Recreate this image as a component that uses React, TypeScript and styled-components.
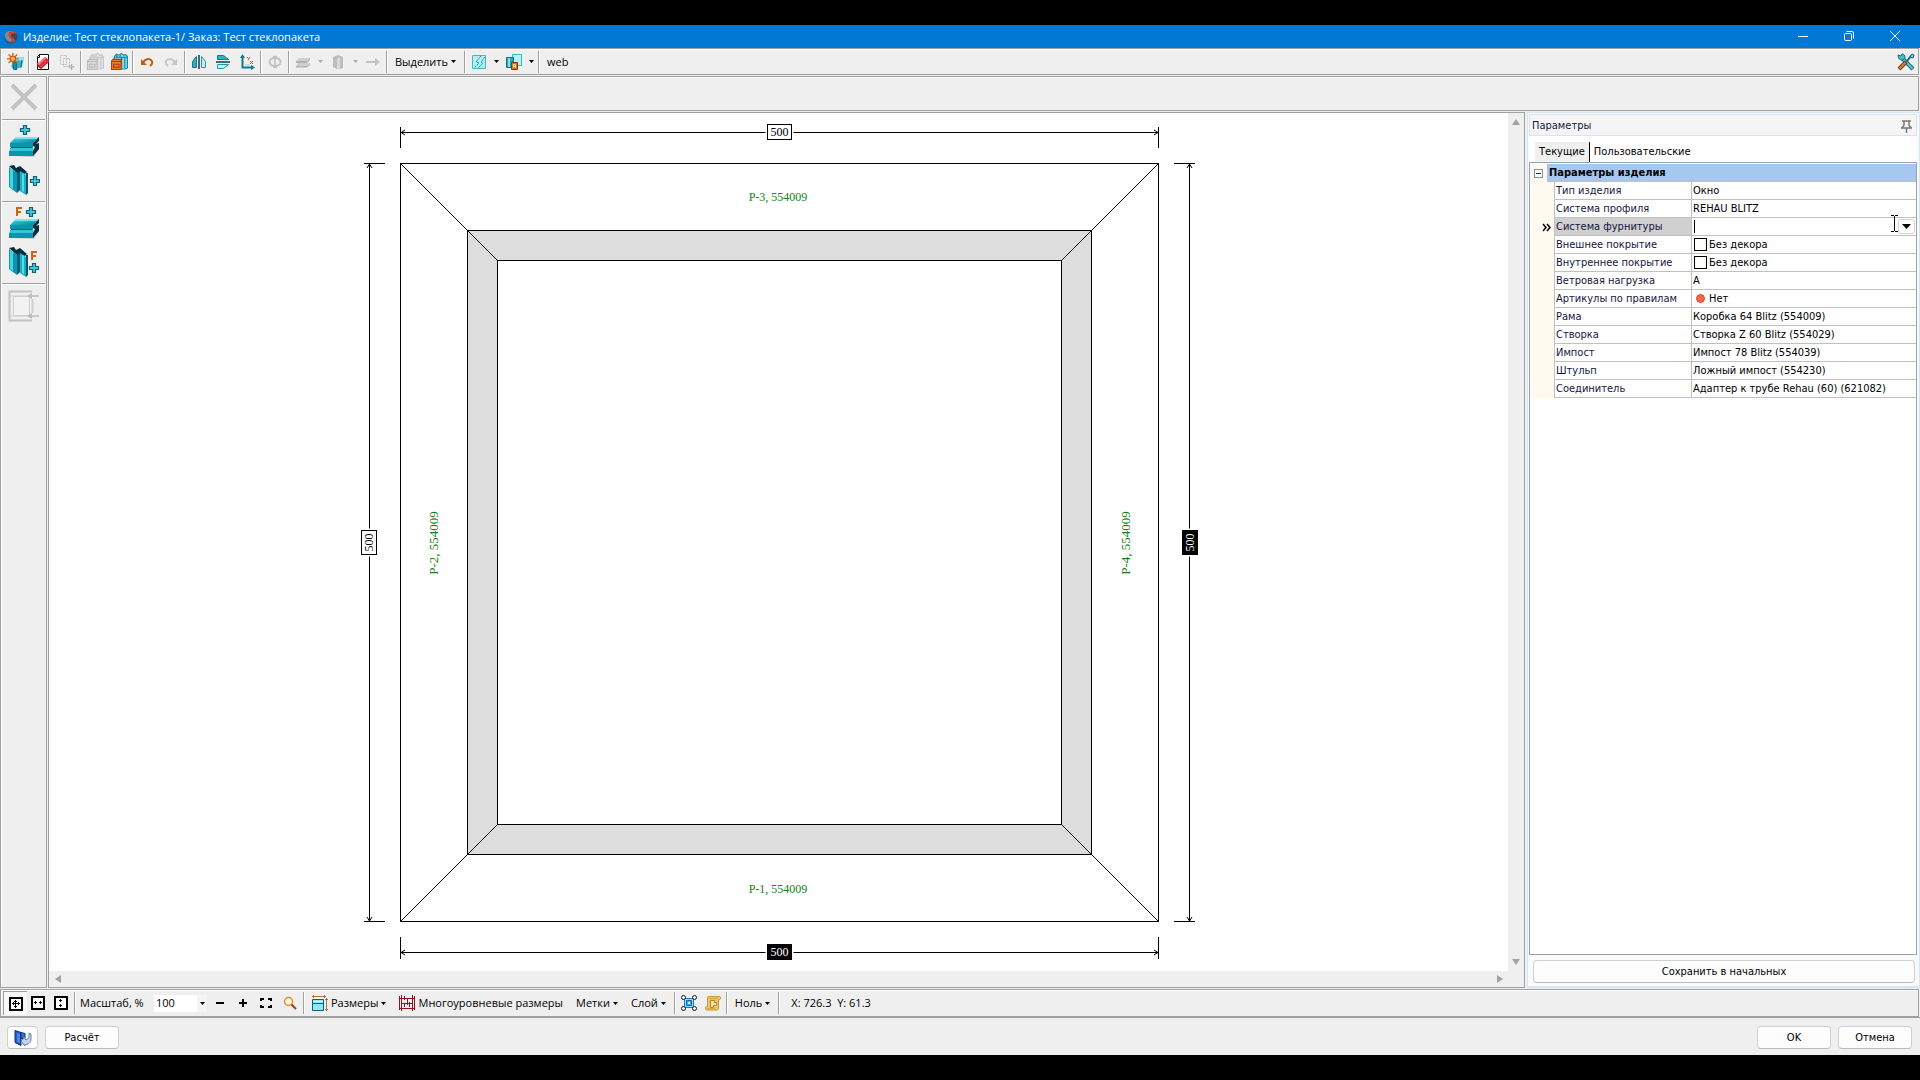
import React from 'react';
import styled, { createGlobalStyle, css } from 'styled-components';

const UI = '"Open Sans", "Noto Sans", sans-serif';
const GRID = '"DejaVu Sans Condensed", "DejaVu Sans", sans-serif';
const LINE = '#a0a0a0';
const FACE = '#efefef';

const GlobalStyle = createGlobalStyle`
  *, *::before, *::after { box-sizing: border-box; }
  body { margin: 0; background: #000; }
  button, input, select { font: inherit; color: inherit; margin: 0; padding: 0; border: 0; background: none; border-radius: 0; outline: none; }
  svg { display: block; flex: none; }
`;

const Screen = styled.div`
  display: flex;
  flex-direction: column;
  height: 100vh;
  padding: 25px 0;
  background: #000;
  color: #000;
  font: 11px/16px ${UI};
`;

const Window = styled.main`
  flex: 1;
  min-height: 0;
  display: flex;
  flex-direction: column;
  background: ${FACE};
`;

const TitleBar = styled.header`
  flex: none;
  display: flex;
  align-items: center;
  gap: 4px;
  height: 23px;
  padding: 0 2px 0 3px;
  background: #0078d4;
  color: #fff;
`;

const Title = styled.h1`
  flex: 1;
  margin: 0;
  font-size: 11px;
  font-weight: 400;
  white-space: nowrap;
`;

const WindowButtons = styled.div`
  display: flex;
`;

const WindowButton = styled.button`
  display: flex;
  align-items: center;
  justify-content: center;
  width: 46px;
  height: 23px;
  padding-bottom: 2px;
`;

const Bar = styled.div<{ $h: number }>`
  flex: none;
  display: flex;
  align-items: center;
  height: ${p => p.$h}px;
  margin-right: 1px;
  padding-left: 2px;
  border: 1px solid ${LINE};
  box-shadow: inset 1px 1px 0 #fff;
`;

const Separator = styled.i`
  flex: none;
  width: 2px;
  height: 22px;
  margin: 0 1px;
  border-left: 1px solid ${LINE};
  border-right: 1px solid #fff;
`;

const Tool = styled.button<{ $w?: number; $pressed?: boolean }>`
  flex: none;
  display: flex;
  align-items: center;
  justify-content: center;
  width: ${p => p.$w ?? 24}px;
  height: 24px;
  ${p => p.$pressed && css`
    background: #f8f8f8;
    border-left: 1px solid ${LINE};
    border-top: 1px solid ${LINE};
  `}
`;

const TextTool = styled.button`
  flex: none;
  display: flex;
  align-items: center;
  gap: 3px;
  height: 24px;
  padding: 0 7px 0 6px;
  white-space: nowrap;
`;

const Spacer = styled.div`
  flex: 1;
`;

const Body = styled.div`
  flex: 1;
  min-height: 0;
  display: flex;
  gap: 1px;
  margin: 1px 0;
`;

const SideBar = styled.nav`
  flex: none;
  display: flex;
  flex-direction: column;
  align-items: center;
  width: 47px;
  border: 1px solid ${LINE};
  box-shadow: inset 1px 1px 0 #fff;
`;

const SideTool = styled.button<{ $h?: number }>`
  display: flex;
  align-items: center;
  justify-content: center;
  width: 40px;
  height: ${p => p.$h ?? 38}px;
`;

const SideRule = styled.hr`
  width: 43px;
  height: 2px;
  margin: 2px 0;
  border: 0;
  border-top: 1px solid ${LINE};
  border-bottom: 1px solid #fff;
`;

const Work = styled.div`
  flex: 1;
  min-width: 0;
  display: flex;
  flex-direction: column;
  gap: 1px;
`;

const Split = styled.div`
  flex: 1;
  min-height: 0;
  display: flex;
  gap: 2px;
`;

const Viewer = styled.section`
  flex: 1;
  min-width: 0;
  display: grid;
  grid-template: minmax(0, 1fr) 16px / minmax(0, 1fr) 16px;
  border: 1px solid ${LINE};
`;

const Canvas = styled.div`
  display: flex;
  align-items: center;
  justify-content: center;
  background: #fff;
  overflow: hidden;
`;

const ScrollBar = styled.div<{ $row?: boolean }>`
  display: flex;
  flex-direction: ${p => (p.$row ? 'row' : 'column')};
  justify-content: space-between;
  align-items: center;
  padding: ${p => (p.$row ? '0 3px 0 4px' : '4px 0')};
`;

const ArrowButton = styled.button`
  display: flex;
  align-items: center;
  justify-content: center;
  width: 10px;
  height: 10px;
`;

const Panel = styled.aside`
  flex: none;
  display: flex;
  flex-direction: column;
  width: 393px;
  padding: 1px 2px 0 1px;
  border: 1px solid #d6e6f5;
  border-bottom-width: 2px;
  background: #fafafa;
  font: 11px/16px ${GRID};
`;

const PanelHead = styled.div`
  flex: none;
  display: flex;
  align-items: center;
  justify-content: space-between;
  height: 22px;
  padding: 2px 4px 0 2px;
  border: 1px solid #dbe2ec;
  background: #f5f5f5;
  color: #15153c;
`;

const PanelTitle = styled.h2`
  margin: 0;
  font-size: 11px;
  font-weight: 400;
`;

const Tabs = styled.div`
  flex: none;
  display: flex;
  height: 26px;
  padding: 6px 0 0 6px;
  background: #fff;
`;

const Tab = styled.button<{ $active?: boolean }>`
  padding: 0 4px;
  background: ${p => (p.$active ? '#f0f0f0' : 'transparent')};
  border-right: ${p => (p.$active ? '1px solid #000' : '0')};
`;

const GridBox = styled.div`
  flex: 1;
  min-height: 0;
  padding-top: 1px;
  border: 1px solid #95a3b3;
  background: #fff;
`;

const Props = styled.table`
  width: 100%;
  table-layout: fixed;
  border-collapse: separate;
  border-spacing: 0;
`;

const Col = styled.col<{ $w?: number }>`
  width: ${p => (p.$w ? `${p.$w}px` : 'auto')};
`;

const Group = styled.th`
  height: 18px;
  padding: 0 0 0 2px;
  background: #a6c8ee;
  border-bottom: 1px solid #c0c0c0;
  font-weight: 700;
  text-align: left;
`;

const Gutter = styled.td`
  height: 18px;
  padding: 0;
  background: #fffaf0;
`;

const GutterInner = styled.div`
  display: flex;
  align-items: center;
  justify-content: flex-end;
  padding-right: 3px;
`;

const Fold = styled.button`
  display: flex;
  align-items: center;
  justify-content: center;
  width: 9px;
  height: 9px;
  margin-left: 4px;
  border: 1px solid #8292a8;
  background: #fff;
`;

const Name = styled.th<{ $active?: boolean }>`
  height: 18px;
  padding: 0 0 0 1px;
  border-left: 1px solid #c0c0c0;
  border-bottom: 1px solid #c0c0c0;
  background: ${p => (p.$active ? '#d0d0d0' : '#fff')};
  color: #15153c;
  font-weight: 400;
  text-align: left;
  white-space: nowrap;
`;

const Value = styled.td`
  height: 18px;
  padding: 0 0 0 1px;
  border-left: 1px solid #c0c0c0;
  border-bottom: 1px solid #c0c0c0;
  white-space: nowrap;
`;

const ValueInner = styled.div`
  position: relative;
  display: flex;
  align-items: center;
  gap: 2px;
  height: 17px;
`;

const Swatch = styled.span`
  width: 13px;
  height: 13px;
  margin-left: 1px;
  border: 1px solid #000;
`;

const Dot = styled.span`
  width: 9px;
  height: 9px;
  margin: 0 2px 0 3px;
  border: 1px solid #c8503c;
  border-radius: 50%;
  background: #f8654a;
`;

const Caret = styled.span`
  width: 1px;
  height: 13px;
  margin-left: 1px;
  background: #000;
`;

const Field = styled.input`
  flex: 1;
  min-width: 0;
  height: 16px;
`;

const DropButton = styled.button`
  display: flex;
  align-items: center;
  justify-content: center;
  width: 17px;
  height: 15px;
  margin-right: 1px;
  border: 1px solid #d0d0d0;
  border-radius: 3px;
  background: #fdfdfd;
`;

const Pointer = styled.svg`
  position: absolute;
  right: 18px;
  top: -3px;
`;

const PanelFoot = styled.div`
  flex: none;
  padding: 5px 2px 3px 4px;
`;

const PushButton = styled.button<{ $w?: string }>`
  display: flex;
  align-items: center;
  justify-content: center;
  width: ${p => p.$w ?? '74px'};
  height: 23px;
  border: 1px solid #d0d0d0;
  border-bottom-color: #bcbcbc;
  border-radius: 4px;
  background: #fdfdfd;
  font: 11px/16px ${GRID};
`;

const ZoomLabel = styled.label`
  width: 77px;
  padding-left: 3px;
  white-space: nowrap;
`;

const ZoomBox = styled.div`
  display: flex;
  align-items: center;
  width: 53px;
  height: 17px;
  margin-right: 1px;
  background: linear-gradient(to right, #fff 43px, #f4f4f4 43px);
`;

const ZoomSelect = styled.select`
  appearance: none;
  flex: 1;
  min-width: 0;
  height: 17px;
  padding-left: 2px;
  line-height: 16px;
`;

const CaretSlot = styled.span`
  width: 10px;
  display: flex;
  justify-content: center;
`;

const Coords = styled.output`
  padding-left: 10px;
  white-space: pre;
`;

const Footer = styled.footer`
  flex: none;
  display: flex;
  align-items: center;
  gap: 7px;
  height: 38px;
  padding: 2px 8px 0 7px;
  border-top: 1px solid ${LINE};
`;

/* ---------- icons ---------- */

const Down = ({ c = '#000' }: { c?: string }) => (
  <svg width="5" height="3" viewBox="0 0 5 3"><path d="M0 0h5L2.500 3z" fill={c} /></svg>
);

const Tri = ({ d }: { d: string }) => (
  <svg width="10" height="10" viewBox="0 0 10 10"><path d={d} fill="#a3a3a3" /></svg>
);

const S16 = ({ children, size = 16 }: { children: React.ReactNode; size?: number }) => (
  <svg width={size} height={size} viewBox="0 0 16 16" fill="none">{children}</svg>
);

const AppIcon = () => (
  <S16>
    <circle cx="8" cy="8" r="6.500" fill="#3c4658" />
    <path d="M2 5c2-4 8-4 11-1-3-1-6 0-6 3s3 5 6 4c-3 3-8 3-10-1-1-2-2-3-1-5z" fill="#7f8896" />
    <path d="M6 3c4-2 7 0 8 3-2-2-5-2-6 0 0 3 4 3 4 6-1 2-4 2-5 0 1 0 2 0 2-1 0-2-5-3-3-8z" fill="#c9412f" />
  </S16>
);

const NewIcon = () => (
  <S16 size={17}>
    <path d="M6 4h10l-2 9-7 3-3-3z" fill="#31b6cc" />
    <path d="M8 4h8l-1 3H7z" fill="#9be7f0" />
    <path d="M6 8v7l3 1V9zM14 7l-1 7" fill="#1c8aa4" stroke="#12708c" />
    <path d="M5.500 0v11M0 5.500h11M1.500 1.500l8 8M9.500 1.500l-8 8" stroke="#d35f14" strokeWidth="1.300" />
    <circle cx="5.500" cy="5.500" r="2.500" fill="#ffb24a" stroke="#c95410" />
  </S16>
);

const EraseIcon = () => (
  <S16>
    <path d="M4.500.5h9v15h-11v-13z" fill="#fff" stroke="#111" />
    <path d="M2.500 3.500h2v-3" stroke="#111" />
    <path d="M2 10l8-7 4 3-8 7z" fill="#e8283c" />
    <path d="M2 10l8-7 1.500 1L4 11z" fill="#ff7886" />
    <path d="M2 10l4 3v2l-4-3z" fill="#a01422" />
    <path d="M6 13l8-7v2l-8 7z" fill="#c01c2e" />
  </S16>
);

const CopyIcon = () => (
  <S16>
    <path d="M1.500 1.500h6v9h-6zM4.500 4.500h6v8h-6z" stroke="#bcbcbc" strokeDasharray="2 1" />
    <path d="M12.500 10v6M9.500 13h6" stroke="#b4b4b4" strokeWidth="1.600" />
  </S16>
);

const OpenBox = ({ off }: { off?: boolean }) => {
  const [a, b, c, d] = off ? ['#c4c4c4', '#e4e4e4', '#bcbcbc', '#dadada'] : ['#14839c', '#7fe0ee', '#a8410e', '#ee7d22'];
  return (
    <S16 size={17}>
      <path d="M3 3.500L5 1l2 1 3-1.500L12 2l2-.5 1.500 2V14L13 15H3z" fill={b} stroke={a} />
      <path d="M3 4h12M10 4v10M13 4v10M5 2l1 2M9 2l-1 2" stroke={a} />
      <path d="M.5 7.500L2 6h8l-.500 1.500V15.500h-9z" fill={d} stroke={c} />
      <path d="M1 8h8.500M2.500 10.500h5v3h-5z" stroke={c} />
    </S16>
  );
};

const UndoIcon = ({ off }: { off?: boolean }) => (
  <svg width="14" height="14" viewBox="0 0 14 14" fill="none">
    <g transform={off ? 'matrix(-1 0 0 1 14 0)' : undefined}>
      <path d="M3 7.500C5 4 9 3 11.500 5.500c1.500 2 .5 4-1.500 5.500" stroke={off ? '#c6c6c6' : '#c65b10'} strokeWidth="2" />
      <path d="M1 4v6h6z" fill={off ? '#c6c6c6' : '#c65b10'} />
    </g>
  </svg>
);

const FlipIcon = ({ vertical }: { vertical?: boolean }) => (
  <S16>
    <g transform={vertical ? 'rotate(90 8 8)' : undefined}>
      <path d="M5.500 2.500v11h-4v-6z" fill="#35aebc" stroke="#15788a" />
      <path d="M10.500 2.500v11h4v-6z" fill="#c4eff2" stroke="#2a94a4" />
      <path d="M8 1v14" stroke="#0d3c48" strokeWidth="1.500" />
    </g>
  </S16>
);

const AxesIcon = () => (
  <S16>
    <path d="M3.500 2v11.500H14" stroke="#10788c" strokeWidth="2" />
    <path d="M3.500 0L6 4H1zM16 13.500L12 11v5z" fill="#10788c" />
    <path d="M8 3l1.500 1.500M11 3l-2 3M11 7l3 3M14 7l-3 3" stroke="#b8582e" />
    <path d="M6 11h5" stroke="#8fd6de" />
  </S16>
);

const PhiIcon = () => (
  <S16>
    <ellipse cx="8" cy="8" rx="5.500" ry="4" stroke="#c0c0c0" strokeWidth="2" />
    <path d="M8 2v12M6 2.500h4M6 13.500h4" stroke="#c0c0c0" strokeWidth="1.500" />
  </S16>
);

const GrayBeam = () => (
  <S16>
    <path d="M4 4h11l-3 3H1zM3 9h11l-2 3H1z" fill="#cfcfcf" />
    <path d="M1 7h11v2H1zM1 12h11v1.500H1zM12 7l3-3v2l-3 3zM12 12l3-3v2l-3 2.500z" fill="#b4b4b4" />
  </S16>
);

const GrayPost = () => (
  <S16>
    <path d="M3 3l5-2 5 2v11l-3 1V5H7v10l-4-2z" fill="#bdbdbd" />
    <path d="M7 5l3-2v12H7z" fill="#d9d9d9" />
  </S16>
);

const GrayArrow = () => (
  <S16><path d="M1 8h11" stroke="#c2c2c2" strokeWidth="2" /><path d="M10 4l5 4-5 4z" fill="#c2c2c2" /></S16>
);

const GlassIcon = () => (
  <S16>
    <path d="M1.500 1.500h13v13h-13z" fill="#b5eef2" stroke="#49b6c4" />
    <path d="M10 2L5 8l3 1-5 5M14 3l-4 5 2 1-5 5" stroke="#248898" strokeDasharray="2 1" />
  </S16>
);

const LockIcon = () => (
  <S16>
    <path d="M6.500.5h9v11h-9z" fill="#b8f2f5" stroke="#41b7c6" />
    <path d="M.5 3.500h7v10h-7z" fill="#26a8bd" stroke="#0e6f86" />
    <path d="M3 4v9" stroke="#7fe0ee" strokeWidth="2" />
    <path d="M5.500 8.500h6v7h-6z" fill="#e0701c" stroke="#8a3208" />
    <path d="M7.500 13.500v-3h2v3M8 12.500h2" stroke="#ffe2a8" />
  </S16>
);

const ToolsIcon = () => (
  <svg width="18" height="18" viewBox="0 0 18 18" fill="none">
    <path d="M5 5l11 11" stroke="#176f7c" strokeWidth="4" />
    <path d="M5 5l10.500 10.500" stroke="#52cbd0" strokeWidth="2" />
    <path d="M1 2l3 1 1-2c3 0 4 3 2 5-2 2-6 1-6-4z" fill="#48bcc6" stroke="#1b6674" />
    <path d="M15 2L9 9" stroke="#1b7686" strokeWidth="2" />
    <path d="M13 4l2-3 2 1-1 3z" fill="#6fdde2" stroke="#1b6674" />
    <path d="M9 9l-7 7" stroke="#7a3713" strokeWidth="4" />
    <path d="M8.500 9.500L2.500 15.500" stroke="#d87c3c" strokeWidth="2" />
  </svg>
);

const CrossIcon = () => (
  <svg width="28" height="28" viewBox="0 0 28 28" fill="none">
    <path d="M2 2l24 24M26 2L2 26" stroke="#c3c3c3" strokeWidth="4" />
  </svg>
);

const Gradient = ({ id }: { id: string }) => (
  <defs>
    <linearGradient id={id} x1="0" x2="1" y1="0" y2="1">
      <stop offset="0" stopColor="#3fdcea" />
      <stop offset="1" stopColor="#077f98" />
    </linearGradient>
  </defs>
);

const Plus = ({ x, y }: { x: number; y: number }) => (
  <path
    transform={`translate(${x} ${y})`}
    d="M-1.500-4.500h3v3h3v3h-3v3h-3v-3h-3v-3h3z"
    fill="#4cc3d2"
    stroke="#0c6478"
    strokeWidth="1.200"
  />
);

const FMark = ({ x, y }: { x: number; y: number }) => (
  <path transform={`translate(${x} ${y})`} d="M1 9V1h5M1 5h4" stroke="#cf6512" strokeWidth="2" fill="none" />
);

const BeamIcon = ({ f }: { f?: boolean }) => (
  <svg width="32" height="34" viewBox="0 0 32 34" fill="none">
    <Gradient id="beam" />
    <path d="M4 31l22 1 5-8v-3z" fill="#c4c4c4" />
    <path d="M8 12h23l-6 6H2z" fill="url(#beam)" />
    <path d="M8 12h23l-2 2H6z" fill="#72e8f0" />
    <path d="M2 18h23v4H2z" fill="#0b94ae" />
    <path d="M3 22h22l-1 2H2z" fill="#0a5f76" />
    <path d="M3 23h22v3H1z" fill="#35c6d8" />
    <path d="M1 26h24v5H1z" fill="#0b94ae" />
    <path d="M25 18l6-6v4l-3 3 3-1v6l-6 7v-5l2-4-2-1z" fill="#04303e" />
    {f ? (<><FMark x={8} y={0} /><Plus x={23} y={5} /></>) : <Plus x={17} y={5} />}
  </svg>
);

const PostIcon = ({ f }: { f?: boolean }) => (
  <svg width="32" height="32" viewBox="0 0 32 32" fill="none">
    <path d="M1 2l5-1 2 3 4-2 7 6-2 2-5-2-2 2z" fill="#04303e" />
    <path d="M1 3l8 6v20l-8-6z" fill="#0b94ae" />
    <path d="M2 4l3 2v19l-3-2z" fill="#47d5e2" />
    <path d="M9 9l4-2v18l-4 4z" fill="#0a5f76" />
    <path d="M12 7l6 4v20l-6-4z" fill="#18afc6" />
    <path d="M14 9l2 1v18l-2-1z" fill="#53dbe6" />
    <path d="M18 9h2v20l-2 2z" fill="#075066" />
    {f ? (<><FMark x={23} y={5} /><Plus x={26} y={22} /></>) : <Plus x={27} y={17} />}
  </svg>
);

const FrameIcon = () => (
  <svg width="32" height="32" viewBox="0 0 32 32" fill="none">
    <path d="M24 1.500H1.500v29H24" stroke="#c2c2c2" strokeWidth="2" />
    <path d="M24.500 9v14" stroke="#cfcfcf" strokeWidth="2" />
    <path d="M5.500 6.500h16v19h-16z" fill="#f2f2f2" stroke="#cfcfcf" />
    <path d="M2 6h22M2 26h22" stroke="#cfcfcf" />
    <path d="M20 6h11M20 26h11" stroke="#bcbcbc" strokeWidth="1.500" />
    <path d="M19 6l5-3v6zM19 26l5-3v6z" fill="#bcbcbc" />
  </svg>
);

const FitIcon = ({ d }: { d: string }) => (
  <svg width="14" height="14" viewBox="0 0 14 14" fill="none">
    <path d="M1 1h12v12H1z" fill="#fff" stroke="#000" strokeWidth="2" />
    <path d={d} fill="#000" />
  </svg>
);
const BOTH = 'M4 6h6v1H4zM6 4h1v6H6zM3 6h1v1H3zM10 6h1v1h-1zM6 3h1v1H6zM6 10h1v1H6zM4 5h1v3H4zM9 5h1v3H9zM5 4h3v1H5zM5 9h3v1H5z';
const ACROSS = 'M3 6h3v1H3zM8 6h3v1H8zM4 5h1v3H4zM9 5h1v3H9z';
const UPDOWN = 'M6 3h1v3H6zM6 8h1v3H6zM5 4h3v1H5zM5 9h3v1H5z';

const CornersIcon = () => (
  <svg width="12" height="10" viewBox="0 0 12 10" fill="none">
    <path d="M1 3V1h3M8 1h3v2M11 7v2H8M4 9H1V7" stroke="#000" strokeWidth="2" />
  </svg>
);

const MinusIcon = () => (
  <svg width="8" height="8" viewBox="0 0 8 8"><path d="M0 3h8v2H0z" /></svg>
);
const PlusIcon = () => (
  <svg width="8" height="8" viewBox="0 0 8 8"><path d="M0 3h3V0h2v3h3v2H5v3H3V5H0z" /></svg>
);

const SearchIcon = () => (
  <svg width="14" height="14" viewBox="0 0 14 14" fill="none">
    <circle cx="5.500" cy="5.500" r="4" fill="#fff6e8" stroke="#e08a28" strokeWidth="1.500" />
    <path d="M8.500 8.500L13 13" stroke="#8c4a12" strokeWidth="2" />
  </svg>
);

const DimsIcon = () => (
  <S16>
    <path d="M.5 4.500h11v11H.5z" fill="#8ee9f4" stroke="#0f5e72" />
    <path d="M1 8.500h11" stroke="#0f5e72" />
    <path d="M2 6.500h9" stroke="#d8fbfd" />
    <path d="M0 1.500h14M1.500 0v3M12.500 0v3M14.500 3v13M13 4.500h3M13 14.500h3" stroke="#a5733c" />
  </S16>
);

const MultiIcon = () => (
  <S16>
    <path d="M2.500 0v16M13.500 0v16M.5 1v14M15.500 1v14M0 3.500h16M0 13.500h16M3 8.500h10M5.500 1v4M8.500 4v6M10.500 7v5M5.500 8v4" stroke="#94101c" />
  </S16>
);

const SelectIcon = () => (
  <S16>
    <path d="M3.500 3.500h9v9h-9z" fill="#8fdcf8" stroke="#1580c8" />
    <path d="M5.500 5.500h5v5h-5z" fill="#39aef0" stroke="#1565b4" />
    <path d="M7 7h2v2H7z" fill="#d8f6ff" />
    <g fill="#fff" stroke="#0b1c2c"><circle cx="2.500" cy="2.500" r="2" /><circle cx="13.500" cy="2.500" r="2" /><circle cx="2.500" cy="13.500" r="2" /><circle cx="13.500" cy="13.500" r="2" /></g>
  </S16>
);

const ScrollIcon = () => (
  <S16>
    <path d="M3.500 1.500h11c1.500 0 1.500 3 0 3h-1v9c0 1-1 2-2 1.500H1.500c-1.500 0-1.500-3.500 0-3.500h1V3c0-1 0-1.500 1-1.500z" fill="#f0c468" stroke="#c8963a" />
    <path d="M5.500 5.500h4v2h2v3h-3v2h-3z" fill="#fbe3a2" stroke="#b98428" />
    <path d="M4 3.500h9M2 13.500h8" stroke="#d6a548" />
  </S16>
);

const DoorIcon = () => (
  <svg width="18" height="18" viewBox="0 0 18 18" fill="none">
    <path d="M1 1.500l6 2v13l-6-3z" fill="#2858c8" stroke="#123078" />
    <path d="M3 4l3 1v9l-3-1z" fill="#4c84e8" />
    <path d="M7 3.500l4 1v5H7z" fill="#3c6cd0" stroke="#123078" />
    <path d="M7 12l4-4v2.500c3 0 4-1 4-3.500V4l2 1v5c0 4-3 5.500-6 5.500V17z" fill="#c4d4e8" stroke="#6984a8" />
  </svg>
);

const PinIcon = () => (
  <svg width="11" height="13" viewBox="0 0 11 13" fill="none">
    <path d="M1 1h9M3 1v4.500M8 1v4.500M1 7.500l2-2M10 7.500l-2-2M0 8h11M5.500 8v5" stroke="#777" strokeWidth="1.500" />
  </svg>
);

/* ---------- drawing ---------- */

const Dim = styled.text<{ $inverse?: boolean }>`
  font: 12px "Liberation Serif", serif;
  text-anchor: middle;
  fill: ${p => (p.$inverse ? '#fff' : '#000')};
`;

const Part = styled.text<{ $turned?: boolean }>`
  font: ${p => (p.$turned ? 13 : 12)}px "Liberation Serif", serif;
  text-anchor: middle;
  fill: #158015;
`;

const DimTag = ({ x, y, turn, inverse }: { x: number; y: number; turn?: boolean; inverse?: boolean }) => (
  <g transform={`translate(${x} ${y})${turn ? ' rotate(-90)' : ''}`}>
    <rect x="-14" y="-9" width="28" height="18" fill="#fff" />
    <rect x="-12" y="-7.500" width="24" height="15" fill={inverse ? '#000' : '#fff'} stroke="#000" />
    <Dim y="4" $inverse={inverse}>500</Dim>
  </g>
);

const Drawing = () => (
  <svg width="840" height="838" viewBox="359 123 840 838" fill="none" stroke="none">
    <g shapeRendering="crispEdges" stroke="#000">
      <rect x="400.500" y="163.500" width="758" height="758" fill="#fff" />
      <rect x="467.500" y="230.500" width="624" height="624" fill="#ddd" />
      <rect x="497.500" y="260.500" width="564" height="564" fill="#fff" />
      <path d="M400.500 127v21M1158.500 127v21M400.500 937v22M1158.500 937v22M364 163.500h21M364 921.500h21M1174 163.500h21M1174 921.500h21" />
      <path d="M400.500 132.500h758M400.500 952.500h758M369.500 163.500v758M1189.500 163.500v758" />
    </g>
    <path
      stroke="#000"
      d="M400.500 163.500l97 97M1158.500 163.500l-97 97M400.500 921.500l97-97M1158.500 921.500l-97-97"
    />
    <path
      stroke="#000"
      d="M405 130l-4 2.500 4 2.500M1154 130l4 2.500-4 2.500M405 950l-4 2.500 4 2.500M1154 950l4 2.500-4 2.500M367 168l2.500-4 2.500 4M367 917l2.500 4 2.500-4M1187 168l2.500-4 2.500 4M1187 917l2.500 4 2.500-4"
    />
    <DimTag x={779.5} y={132} />
    <DimTag x={779.5} y={952} inverse />
    <DimTag x={369} y={542.5} turn />
    <DimTag x={1190} y={542.5} turn inverse />
    <Part x="778" y="201">P-3, 554009</Part>
    <Part x="778" y="893">P-1, 554009</Part>
    <Part $turned transform="translate(438 543) rotate(-90)">P-2, 554009</Part>
    <Part $turned transform="translate(1130 543) rotate(-90)">P-4, 554009</Part>
  </svg>
);

/* ---------- data ---------- */

type Row = { name: string; value: string; mark?: 'swatch' | 'dot'; editing?: boolean };

const rows: Row[] = [
  { name: 'Тип изделия', value: 'Окно' },
  { name: 'Система профиля', value: 'REHAU BLITZ' },
  { name: 'Система фурнитуры', value: '', editing: true },
  { name: 'Внешнее покрытие', value: 'Без декора', mark: 'swatch' },
  { name: 'Внутреннее покрытие', value: 'Без декора', mark: 'swatch' },
  { name: 'Ветровая нагрузка', value: 'A' },
  { name: 'Артикулы по правилам', value: 'Нет', mark: 'dot' },
  { name: 'Рама', value: 'Коробка 64 Blitz (554009)' },
  { name: 'Створка', value: 'Створка Z 60 Blitz (554029)' },
  { name: 'Импост', value: 'Импост 78 Blitz (554039)' },
  { name: 'Штульп', value: 'Ложный импост (554230)' },
  { name: 'Соединитель', value: 'Адаптер к трубе Rehau (60) (621082)' },
];

const PropertyRow = ({ row }: { row: Row }) => (
  <tr>
    <Gutter colSpan={2}>
      {row.editing && (
        <GutterInner>
          <svg width="9" height="9" viewBox="0 0 9 9" fill="none">
            <path d="M1 1l3 3.500L1 8M5 1l3 3.500L5 8" stroke="#000" strokeWidth="1.500" />
          </svg>
        </GutterInner>
      )}
    </Gutter>
    <Name scope="row" $active={row.editing}>{row.name}</Name>
    <Value>
      <ValueInner>
        {row.mark === 'swatch' && <Swatch />}
        {row.mark === 'dot' && <Dot />}
        {row.editing ? (
          <>
            <Caret />
            <Field aria-label={row.name} defaultValue="" />
            <DropButton aria-label="Открыть список">
              <svg width="9" height="5" viewBox="0 0 9 5"><path d="M0 0h9L4.500 5z" /></svg>
            </DropButton>
            <Pointer width="7" height="17" viewBox="0 0 7 17" fill="none">
              <path d="M0 .5h3M4 .5h3M3.500 1v15M0 16.500h3M4 16.500h3" stroke="#000" />
            </Pointer>
          </>
        ) : row.value}
      </ValueInner>
    </Value>
  </tr>
);

const TopToolbar = () => (
  <Bar $h={27} role="toolbar">
    <Tool aria-label="Новое изделие"><NewIcon /></Tool>
    <Separator />
    <Tool aria-label="Очистить"><EraseIcon /></Tool>
    <Tool disabled aria-label="Копировать"><CopyIcon /></Tool>
    <Separator />
    <Tool disabled aria-label="Сохранить образец"><OpenBox off /></Tool>
    <Tool aria-label="Каталог"><OpenBox /></Tool>
    <Separator />
    <Tool aria-label="Отменить"><UndoIcon /></Tool>
    <Tool disabled aria-label="Повторить"><UndoIcon off /></Tool>
    <Separator />
    <Tool aria-label="Отразить по горизонтали"><FlipIcon /></Tool>
    <Tool aria-label="Отразить по вертикали"><FlipIcon vertical /></Tool>
    <Tool aria-label="Оси"><AxesIcon /></Tool>
    <Separator />
    <Tool disabled aria-label="Диаметр"><PhiIcon /></Tool>
    <Separator />
    <Tool disabled aria-label="Балка"><GrayBeam /></Tool>
    <Tool $w={11} disabled aria-label="Балка: меню"><Down c="#a8a8a8" /></Tool>
    <Tool disabled aria-label="Стойка"><GrayPost /></Tool>
    <Tool $w={11} disabled aria-label="Стойка: меню"><Down c="#a8a8a8" /></Tool>
    <Tool disabled aria-label="Далее"><GrayArrow /></Tool>
    <Separator />
    <TextTool>Выделить <Down /></TextTool>
    <Separator />
    <Tool aria-label="Стекло"><GlassIcon /></Tool>
    <Tool $w={11} aria-label="Стекло: меню"><Down /></Tool>
    <Tool aria-label="Слой замка"><LockIcon /></Tool>
    <Tool $w={11} aria-label="Слой замка: меню"><Down /></Tool>
    <Separator />
    <TextTool>web</TextTool>
    <Spacer />
    <Tool aria-label="Настройки"><ToolsIcon /></Tool>
  </Bar>
);

const BottomToolbar = () => (
  <Bar $h={28} role="toolbar">
    <Tool $pressed aria-label="Вписать"><FitIcon d={BOTH} /></Tool>
    <Tool $w={22} aria-label="По ширине"><FitIcon d={ACROSS} /></Tool>
    <Tool aria-label="По высоте"><FitIcon d={UPDOWN} /></Tool>
    <Separator />
    <ZoomLabel htmlFor="zoom">Масштаб, %</ZoomLabel>
    <ZoomBox>
      <ZoomSelect id="zoom" defaultValue="100"><option>100</option></ZoomSelect>
      <CaretSlot><Down /></CaretSlot>
    </ZoomBox>
    <Tool aria-label="Уменьшить"><MinusIcon /></Tool>
    <Tool $w={22} aria-label="Увеличить"><PlusIcon /></Tool>
    <Tool aria-label="Показать всё"><CornersIcon /></Tool>
    <Tool aria-label="Лупа"><SearchIcon /></Tool>
    <Separator />
    <TextTool><DimsIcon />Размеры <Down /></TextTool>
    <TextTool><MultiIcon />Многоуровневые размеры</TextTool>
    <TextTool>Метки <Down /></TextTool>
    <TextTool>Слой <Down /></TextTool>
    <Separator />
    <Tool aria-label="Узлы"><SelectIcon /></Tool>
    <Tool aria-label="Чертёж"><ScrollIcon /></Tool>
    <Separator />
    <TextTool>Ноль <Down /></TextTool>
    <Separator />
    <Coords>X: 726.3  Y: 61.3</Coords>
  </Bar>
);

export default function App() {
  return (
    <Screen>
      <GlobalStyle />
      <Window>
        <TitleBar>
          <AppIcon />
          <Title>Изделие: Тест стеклопакета-1/ Заказ: Тест стеклопакета</Title>
          <WindowButtons>
            <WindowButton aria-label="Свернуть">
              <svg width="10" height="10" viewBox="0 0 10 10"><path d="M0 5h10v1H0z" fill="#fff" /></svg>
            </WindowButton>
            <WindowButton aria-label="Развернуть">
              <svg width="10" height="10" viewBox="0 0 10 10" fill="none" stroke="#fff">
                <rect x=".5" y="2.500" width="7" height="7" rx="1" />
                <path d="M2.500.5h5.500a1.500 1.500 0 0 1 1.500 1.500v5.500" />
              </svg>
            </WindowButton>
            <WindowButton aria-label="Закрыть">
              <svg width="10" height="10" viewBox="0 0 10 10" stroke="#fff"><path d="M0 0l10 10M10 0L0 10" /></svg>
            </WindowButton>
          </WindowButtons>
        </TitleBar>
        <TopToolbar />
        <Body>
          <SideBar>
            <SideTool $h={40} disabled aria-label="Удалить"><CrossIcon /></SideTool>
            <SideRule />
            <SideTool aria-label="Добавить балку"><BeamIcon /></SideTool>
            <SideTool aria-label="Добавить стойку"><PostIcon /></SideTool>
            <SideRule />
            <SideTool aria-label="Добавить балку F"><BeamIcon f /></SideTool>
            <SideTool aria-label="Добавить стойку F"><PostIcon f /></SideTool>
            <SideRule />
            <SideTool disabled aria-label="Рама"><FrameIcon /></SideTool>
          </SideBar>
          <Work>
            <Bar $h={35} />
            <Split>
              <Viewer>
                <Canvas><Drawing /></Canvas>
                <ScrollBar>
                  <ArrowButton aria-label="Вверх"><Tri d="M5 2l4 6H1z" /></ArrowButton>
                  <ArrowButton aria-label="Вниз"><Tri d="M5 8L1 2h8z" /></ArrowButton>
                </ScrollBar>
                <ScrollBar $row>
                  <ArrowButton aria-label="Влево"><Tri d="M2 5l6-4v8z" /></ArrowButton>
                  <ArrowButton aria-label="Вправо"><Tri d="M8 5L2 1v8z" /></ArrowButton>
                </ScrollBar>
              </Viewer>
              <Panel>
                <PanelHead>
                  <PanelTitle>Параметры</PanelTitle>
                  <PinIcon />
                </PanelHead>
                <Tabs role="tablist">
                  <Tab role="tab" aria-selected $active>Текущие</Tab>
                  <Tab role="tab">Пользовательские</Tab>
                </Tabs>
                <GridBox>
                  <Props>
                    <colgroup>
                      <Col $w={17} />
                      <Col $w={7} />
                      <Col $w={137} />
                      <Col />
                    </colgroup>
                    <tbody>
                      <tr>
                        <Gutter><Fold aria-label="Свернуть группу"><svg width="5" height="1" viewBox="0 0 5 1"><path d="M0 0h5v1H0z" fill="#333" /></svg></Fold></Gutter>
                        <Group colSpan={3} scope="colgroup">Параметры изделия</Group>
                      </tr>
                      {rows.map(row => <PropertyRow key={row.name} row={row} />)}
                    </tbody>
                  </Props>
                </GridBox>
                <PanelFoot><PushButton $w="100%">Сохранить в начальных</PushButton></PanelFoot>
              </Panel>
            </Split>
          </Work>
        </Body>
        <BottomToolbar />
        <Footer>
          <PushButton $w="31px" aria-label="Выход"><DoorIcon /></PushButton>
          <PushButton>Расчёт</PushButton>
          <Spacer />
          <PushButton>OK</PushButton>
          <PushButton>Отмена</PushButton>
        </Footer>
      </Window>
    </Screen>
  );
}
